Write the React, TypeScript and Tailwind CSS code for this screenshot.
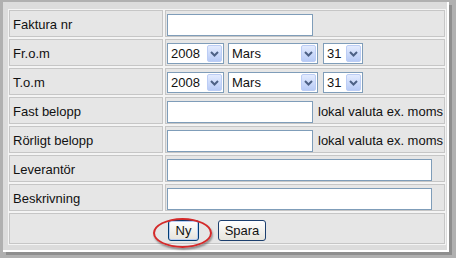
import React from "react";

const Chevron = () => (
  <svg width="9" height="6" viewBox="0 0 9 6">
    <path d="M1 1 L4.5 4.5 L8 1" fill="none" stroke="#4d6185" strokeWidth="2" />
  </svg>
);

const Select = ({ value, className }: { value: string; className: string }) => (
  <div
    className={`${className} h-[21px] bg-white border border-[#7f9db9] flex items-center justify-between pl-[3px] pr-[1px]`}
  >
    <span>{value}</span>
    <span className="w-[15px] h-[17px] rounded-[2px] border border-[#bccdf5] bg-gradient-to-b from-[#e3ebfe] to-[#b8cbf6] flex items-center justify-center">
      <Chevron />
    </span>
  </div>
);

const Label = ({ children }: { children: React.ReactNode }) => (
  <div className="bg-[#e6e6e6] border border-[#c6c6c6] flex items-center pl-[3px] pt-[2px]">{children}</div>
);

const Cell = ({ children }: { children: React.ReactNode }) => (
  <div className="bg-[#e6e6e6] border border-[#c6c6c6] flex items-center pl-[1px] pt-[2px] gap-[5px]">{children}</div>
);

const TextBox = ({ className }: { className: string }) => (
  <div className={`${className} h-[22px] bg-white border border-[#7f9db9]`} />
);

export default function App() {
  return (
    <div className="w-[456px] h-[258px] overflow-hidden bg-[#b0b0b0] pl-[3px] pt-[2px] font-['Liberation_Sans',Arial,sans-serif] text-[13px] text-[#111]">
      <div className="w-[446px] h-[250px] bg-[#dcdcdc] border-r-2 border-b-2 border-white shadow-[3px_3px_0_#8e8e8e] pt-[7px] pl-[5px]">
        <div className="w-[438px] bg-[#f4f4f4] p-[1px] grid grid-cols-[154px_1fr] grid-rows-[27px_27px_27px_27px_27px_27px_27px_31px] gap-[2px]">
          <Label>Faktura nr</Label>
          <Cell>
            <TextBox className="w-[146px]" />
          </Cell>

          <Label>Fr.o.m</Label>
          <Cell>
            <Select value="2008" className="w-[57px]" />
            <Select value="Mars" className="w-[90px] ml-[-1px]" />
            <Select value="31" className="w-[40px]" />
          </Cell>

          <Label>T.o.m</Label>
          <Cell>
            <Select value="2008" className="w-[57px]" />
            <Select value="Mars" className="w-[90px] ml-[-1px]" />
            <Select value="31" className="w-[40px]" />
          </Cell>

          <Label>Fast belopp</Label>
          <Cell>
            <TextBox className="w-[146px]" />
            <span>lokal valuta ex. moms</span>
          </Cell>

          <Label>Rörligt belopp</Label>
          <Cell>
            <TextBox className="w-[146px]" />
            <span>lokal valuta ex. moms</span>
          </Cell>

          <Label>Leverantör</Label>
          <Cell>
            <TextBox className="w-[265px]" />
          </Cell>

          <Label>Beskrivning</Label>
          <Cell>
            <TextBox className="w-[265px]" />
          </Cell>

          <div className="col-span-2 relative bg-[#e6e6e6] border border-[#c6c6c6] flex items-center pl-[158px] pt-[4px] gap-[19px]">
            <button className="w-[31px] h-[21px] rounded-[3px] border border-[#003c74] bg-gradient-to-b from-white to-[#e6e4dc] shadow-[inset_0_0_0_1px_#b8cdf3] text-[13px] leading-none">
              Ny
            </button>
            <button className="w-[48px] h-[21px] rounded-[3px] border border-[#1c3f6e] bg-gradient-to-b from-white to-[#e6e4dc] text-[13px] leading-none">
              Spara
            </button>
            <div className="absolute left-[143px] top-[4px] w-[59px] h-[30px] rounded-[50%] border-2 border-[#d42a2a] shadow-[1px_2px_2px_rgba(0,0,0,0.35)]" />
          </div>
        </div>
      </div>
    </div>
  );
}
